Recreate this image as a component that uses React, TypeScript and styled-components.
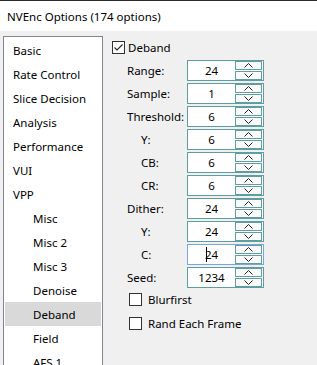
import React from "react";
import styled, { createGlobalStyle } from "styled-components";

const Global = createGlobalStyle`
  html, body { margin: 0; padding: 0; background: #f0f0f0; }
  body { font-family: "Noto Sans", "Segoe UI", sans-serif; font-size: 11.5px; color: #000; overflow: hidden; }
`;

const Window = styled.div`
  width: 317px;
  height: 365px;
  display: flex;
  flex-direction: column;
  background: #f0f0f0;
  overflow: hidden;
`;

const TitleBar = styled.div`
  height: 30px;
  flex: none;
  background: #fff;
  border-top: 1px solid #2b2b2b;
  display: flex;
  align-items: center;
  padding-left: 7px;
  color: #000;
`;

const Body = styled.div`
  flex: 1;
  display: flex;
  padding: 5px 0 0 3px;
  min-height: 0;
`;

const List = styled.div`
  width: 96px;
  flex: none;
  background: #fff;
  border: 1px solid #828790;
  border-bottom: none;
  padding: 1px;
  display: flex;
  flex-direction: column;
`;

const Item = styled.div<{ $sub?: boolean; $selected?: boolean }>`
  height: 24px;
  flex: none;
  display: flex;
  align-items: center;
  padding-left: ${(p) => (p.$sub ? 28 : 8)}px;
  background: ${(p) => (p.$selected ? "#d9d9d9" : "transparent")};
  white-space: nowrap;
`;

const Panel = styled.div`
  flex: 1;
  display: flex;
  flex-direction: column;
  padding: 0 0 0 9px;
`;

const CheckRow = styled.div<{ $indent?: number; $top?: number; $gap?: number }>`
  display: flex;
  align-items: center;
  gap: ${(p) => p.$gap ?? 3}px;
  height: 13px;
  padding-left: ${(p) => p.$indent ?? 0}px;
  margin-top: ${(p) => p.$top ?? 0}px;
`;

const Box = styled.div`
  width: 11px;
  height: 11px;
  border: 1px solid #333;
  background: #fff;
  display: flex;
  align-items: center;
  justify-content: center;
`;

const Rows = styled.div`
  display: flex;
  flex-direction: column;
  gap: 2px;
  margin-top: 6px;
  padding-left: 15px;
`;

const Row = styled.div`
  display: flex;
  align-items: center;
  height: 21px;
`;

const Label = styled.div<{ $sub?: boolean }>`
  width: 60px;
  padding-left: ${(p) => (p.$sub ? 14 : 0)}px;
  box-sizing: border-box;
  white-space: nowrap;
`;

const Spin = styled.div<{ $focus?: boolean }>`
  width: 75px;
  height: 19px;
  border: 1px solid ${(p) => (p.$focus ? "#7aa3e5" : "#5f9ea0")};
  background: #fff;
  display: flex;
  align-items: center;
`;

const Value = styled.div`
  flex: 1;
  text-align: center;
  position: relative;
  line-height: 15px;
`;

const Caret = styled.span`
  position: absolute;
  left: 18px;
  top: 0px;
  width: 1px;
  height: 15px;
  background: #000;
`;

const Buttons = styled.div`
  width: 27px;
  display: flex;
  flex-direction: column;
  gap: 1px;
  margin-right: 1px;
`;

const Btn = styled.div`
  height: 7px;
  border: 1px solid #5f9ea0;
  background: #fafafa;
  display: flex;
  align-items: center;
  justify-content: center;
`;

const Chevron = ({ up }: { up?: boolean }) => (
  <svg width="9" height="5" viewBox="0 0 9 5">
    <polyline
      points={up ? "0.5,4.5 4.5,0.5 8.5,4.5" : "0.5,0.5 4.5,4.5 8.5,0.5"}
      fill="none"
      stroke="#222"
      strokeWidth="1"
    />
  </svg>
);

const SpinBox = ({ value, focus }: { value: string; focus?: boolean }) => (
  <Spin $focus={focus}>
    <Value>
      {focus && <Caret />}
      {value}
    </Value>
    <Buttons>
      <Btn>
        <Chevron up />
      </Btn>
      <Btn>
        <Chevron />
      </Btn>
    </Buttons>
  </Spin>
);

const Check = () => (
  <svg width="11" height="11" viewBox="0 0 11 11">
    <polyline points="1.5,5.5 4,8 9.5,2.5" fill="none" stroke="#222" strokeWidth="1.1" />
  </svg>
);

const items: { t: string; sub?: boolean; sel?: boolean }[] = [
  { t: "Basic" },
  { t: "Rate Control" },
  { t: "Slice Decision" },
  { t: "Analysis" },
  { t: "Performance" },
  { t: "VUI" },
  { t: "VPP" },
  { t: "Misc", sub: true },
  { t: "Misc 2", sub: true },
  { t: "Misc 3", sub: true },
  { t: "Denoise", sub: true },
  { t: "Deband", sub: true, sel: true },
  { t: "Field", sub: true },
  { t: "AFS 1", sub: true },
];

const rows: { l: string; v: string; sub?: boolean; focus?: boolean }[] = [
  { l: "Range:", v: "24" },
  { l: "Sample:", v: "1" },
  { l: "Threshold:", v: "6" },
  { l: "Y:", v: "6", sub: true },
  { l: "CB:", v: "6", sub: true },
  { l: "CR:", v: "6", sub: true },
  { l: "Dither:", v: "24" },
  { l: "Y:", v: "24", sub: true },
  { l: "C:", v: "24", sub: true, focus: true },
  { l: "Seed:", v: "1234" },
];

const Bottom = styled.div`
  display: flex;
  flex-direction: column;
  gap: 11px;
  margin-top: 5px;
`;

export default function App() {
  return (
    <Window>
      <Global />
      <TitleBar>NVEnc Options (174 options)</TitleBar>
      <Body>
        <List>
          {items.map((it, i) => (
            <Item key={i} $sub={it.sub} $selected={it.sel}>
              {it.t}
            </Item>
          ))}
        </List>
        <Panel>
          <CheckRow $top={5}>
            <Box>
              <Check />
            </Box>
            <span>Deband</span>
          </CheckRow>
          <Rows>
            {rows.map((r, i) => (
              <Row key={i}>
                <Label $sub={r.sub}>{r.l}</Label>
                <SpinBox value={r.v} focus={r.focus} />
              </Row>
            ))}
          </Rows>
          <Bottom>
            <CheckRow $indent={17} $gap={6}>
              <Box />
              <span>Blurfirst</span>
            </CheckRow>
            <CheckRow $indent={17} $gap={6}>
              <Box />
              <span>Rand Each Frame</span>
            </CheckRow>
          </Bottom>
        </Panel>
      </Body>
    </Window>
  );
}
